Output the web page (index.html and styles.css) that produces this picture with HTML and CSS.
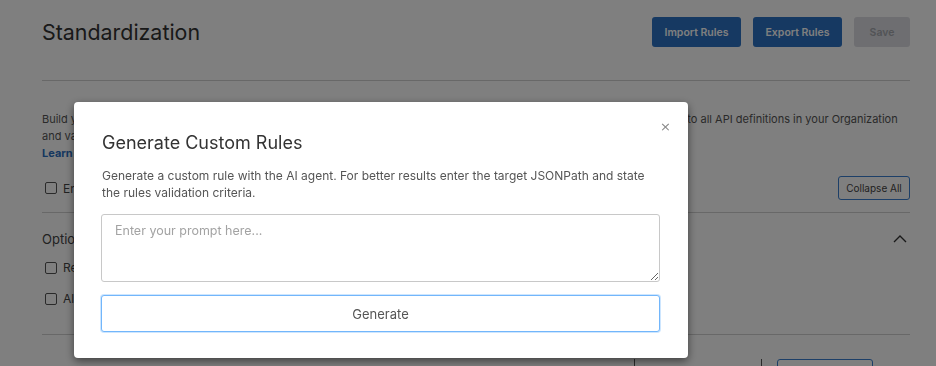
FILE: index.html
```html
<!DOCTYPE html>
<html lang="en">
<head>
    <meta charset="UTF-8">
    <meta name="viewport" content="width=device-width, initial-scale=1.0">
    <title>Standardization</title>
    <link rel="stylesheet" href="styles.css">
</head>
<body>
    <div class="page">
        <div class="page-header">
            <h1>Standardization</h1>
            <div class="header-actions">
                <button class="btn-primary">Import Rules</button>
                <button class="btn-primary">Export Rules</button>
                <button class="btn-disabled" disabled>Save</button>
            </div>
        </div>

        <div class="intro">
            <p>Build your own custom rules to enforce your API design standards. All custom rules you created and enabled here will apply to all API definitions in your Organization<br>
            and validate every change made by your team members in the editor.<br>
            <a href="#">Learn more</a></p>
        </div>

        <div class="toolbar">
            <label class="check"><span class="box"></span>Enable all rules</label>
            <button class="btn-outline">Collapse All</button>
        </div>

        <div class="section">
            <div class="section-head">
                <span>Options</span>
                <svg class="chevron" width="14" height="8" viewBox="0 0 14 8"><path d="M1 7 L7 1 L13 7" fill="none" stroke="#333" stroke-width="1.4"/></svg>
            </div>
            <label class="check"><span class="box"></span>Require rules on every save</label>
            <label class="check"><span class="box"></span>Allow warnings</label>
        </div>

        <div class="bottom-row">
            <span class="divider"></span>
            <span class="divider"></span>
            <span class="ghost-btn"></span>
        </div>
    </div>

    <div class="overlay">
        <div class="modal">
            <button class="close">&times;</button>
            <h2>Generate Custom Rules</h2>
            <p class="modal-text">Generate a custom rule with the AI agent. For better results enter the target JSONPath and state the rules validation criteria.</p>
            <textarea placeholder="Enter your prompt here..."></textarea>
            <button class="btn-generate">Generate</button>
        </div>
    </div>
</body>
</html>
```

FILE: styles.css
```css
/* General */
body {
    margin: 0;
    font-family: Inter, 'Noto Sans', sans-serif;
    color: #333;
    background-color: #ffffff;
    overflow: hidden;
}

.page {
    padding: 0 26px 0 42px;
}

/* Header */
.page-header {
    display: flex;
    align-items: center;
    justify-content: space-between;
    padding-top: 17px;
    height: 63px;
    border-bottom: 1px solid #d0d0d0;
}

.page-header h1 {
    margin: 0;
    font-size: 21.4px;
    font-weight: 400;
    line-height: 31px;
    align-self: flex-start;
    color: #333;
}

.header-actions {
    display: flex;
    gap: 12px;
    align-self: flex-start;
}

.btn-primary,
.btn-disabled {
    height: 30px;
    padding: 0 12px;
    border: none;
    border-radius: 3px;
    font-family: inherit;
    font-size: 10.5px;
    font-weight: 600;
}

.btn-primary {
    width: 89px;
    background-color: #2c72c4;
    color: #ffffff;
}

.btn-disabled {
    width: 56px;
    background-color: #dcdde3;
    color: #a5a7ad;
}

/* Intro */
.intro p {
    margin: 30px 0 0;
    font-size: 11px;
    line-height: 17px;
    color: #555;
}

.intro a {
    color: #2c6fc0;
    font-weight: 700;
    text-decoration: none;
}

/* Toolbar */
.toolbar {
    display: flex;
    align-items: center;
    justify-content: space-between;
    padding: 14px 0 12px;
    border-bottom: 1px solid #d0d0d0;
}

.check {
    display: flex;
    align-items: center;
    gap: 6px;
    height: 15px;
    font-size: 12px;
    color: #444;
    margin-left: 3px;
}

.box {
    width: 10px;
    height: 10px;
    border: 1.5px solid #555;
    border-radius: 2px;
}

.btn-outline {
    width: 72px;
    height: 24px;
    padding: 0;
    background: #ffffff;
    border: 1px solid #3a7fd0;
    border-radius: 3px;
    font-family: inherit;
    font-size: 10px;
    color: #444;
}

/* Options section */
.section {
    padding: 18px 0 28px;
    border-bottom: 1px solid #d0d0d0;
    display: flex;
    flex-direction: column;
    gap: 16px;
}

.section-head {
    display: flex;
    align-items: center;
    justify-content: space-between;
    height: 16px;
    font-size: 13px;
    color: #444;
    padding-right: 3px;
    margin-bottom: -3px;
}

.bottom-row {
    display: flex;
    align-items: flex-start;
    padding: 24px 0 0 592px;
}

.divider {
    width: 1px;
    height: 20px;
    background: #555;
    margin-right: 126px;
}

.divider + .divider {
    margin-right: 15px;
}

.ghost-btn {
    width: 94px;
    height: 20px;
    border: 1px solid #3a7fd0;
    border-radius: 3px;
}

/* Modal */
.overlay {
    position: fixed;
    inset: 0;
    background-color: rgba(0, 0, 0, 0.5);
    padding: 102px 0 0 74px;
}

.modal {
    position: relative;
    width: 558px;
    padding: 29px 28px 26px;
    background-color: #ffffff;
    border-radius: 4px;
    box-shadow: 0 3px 9px rgba(0, 0, 0, 0.5);
}

.close {
    position: absolute;
    top: 16px;
    right: 17px;
    padding: 0;
    border: none;
    background: none;
    font-size: 13px;
    line-height: 18px;
    color: #888;
    font-family: 'DejaVu Sans', sans-serif;
}

.modal h2 {
    margin: 0;
    font-size: 18px;
    font-weight: 400;
    line-height: 24px;
    color: #333;
}

.modal-text {
    margin: 12px 0 0;
    font-size: 12px;
    line-height: 17px;
    color: #555;
}

.modal textarea {
    display: block;
    box-sizing: border-box;
    width: calc(100% + 1px);
    height: 68px;
    margin: 13px 0 0 -1px;
    padding: 8px 13px;
    border: 1px solid #c8c8c8;
    border-radius: 3px;
    font-family: inherit;
    font-size: 12.5px;
    color: #333;
    resize: vertical;
}

.modal textarea::placeholder {
    color: #a3a3a3;
}

.btn-generate {
    display: block;
    width: calc(100% + 1px);
    height: 37px;
    margin: 13px 0 0 -1px;
    background: #ffffff;
    border: 1px solid #72b6fb;
    border-radius: 3px;
    box-shadow: 0 0 0 1px rgba(114, 182, 251, 0.35);
    font-family: inherit;
    font-size: 13px;
    color: #555;
}
```
